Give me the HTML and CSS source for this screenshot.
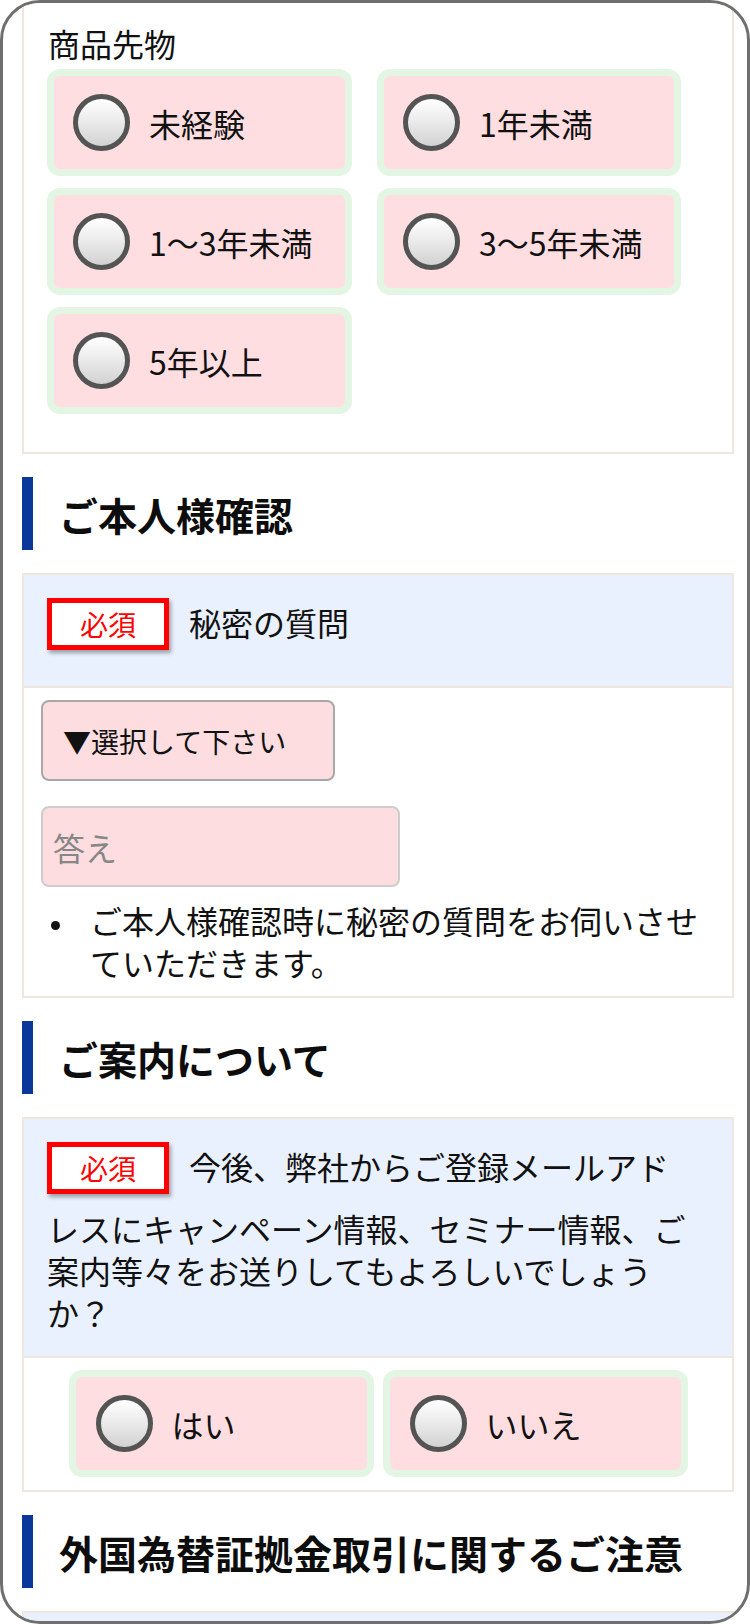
FILE: index.html
```html
<!DOCTYPE html>
<html lang="ja">
<head>
<meta charset="utf-8">
<title>お申込みフォーム</title>
<link rel="stylesheet" href="styles.css">
</head>
<body>
<div class="frame">
  <section class="box box-open">
    <div class="box-body first">
      <p class="field-label">商品先物</p>
      <div class="opt-grid">
        <label class="opt"><input type="radio" name="futures" class="radio"><span>未経験</span></label>
        <label class="opt"><input type="radio" name="futures" class="radio"><span>1年未満</span></label>
        <label class="opt"><input type="radio" name="futures" class="radio"><span>1〜3年未満</span></label>
        <label class="opt"><input type="radio" name="futures" class="radio"><span>3〜5年未満</span></label>
        <label class="opt"><input type="radio" name="futures" class="radio"><span>5年以上</span></label>
      </div>
    </div>
  </section>

  <h2 class="sec-title">ご本人様確認</h2>
  <section class="box">
    <div class="box-head"><span class="req">必須</span>秘密の質問</div>
    <div class="box-body">
      <select class="select"><option>▼選択して下さい</option></select>
      <input class="answer" type="text" placeholder="答え">
      <ul class="notes">
        <li>ご本人様確認時に秘密の質問をお伺いさせていただきます。</li>
      </ul>
    </div>
  </section>

  <h2 class="sec-title">ご案内について</h2>
  <section class="box">
    <div class="box-head"><span class="req">必須</span>今後、弊社からご登録メールアドレスにキャンペーン情報、セミナー情報、ご案内等々をお送りしてもよろしいでしょうか？</div>
    <div class="box-body yesno">
      <label class="opt"><input type="radio" name="mail" class="radio"><span>はい</span></label>
      <label class="opt"><input type="radio" name="mail" class="radio"><span>いいえ</span></label>
    </div>
  </section>

  <h2 class="sec-title">外国為替証拠金取引に関するご注意</h2>
  <section class="box">
    <div class="box-head empty"></div>
  </section>
</div>
</body>
</html>
```

FILE: styles.css
```css
html, body {
  margin: 0;
  padding: 0;
  background: #ffffff;
}

body {
  font-family: "Noto Sans CJK JP", "Noto Sans", sans-serif;
  color: #111111;
}

.frame {
  box-sizing: border-box;
  width: 750px;
  height: 1624px;
  border: 3px solid #6f6f6f;
  border-radius: 40px;
  overflow: hidden;
  padding: 0 13px 0 19px;
  background: #ffffff;
}

.box {
  border: 2px solid #eee6df;
  background: #ffffff;
}

.box-open {
  border-top: none;
}

.box-body {
  padding: 12px 24px 13px 17px;
}

.box-body.first {
  padding: 19px 20px 38px 23px;
}

.field-label {
  margin: 0 0 5px 1px;
  font-size: 32px;
  line-height: 42px;
}

.opt-grid {
  display: grid;
  grid-template-columns: 305px 304px;
  grid-auto-rows: 107px;
  column-gap: 25px;
  row-gap: 12px;
}

.opt {
  box-sizing: border-box;
  height: 107px;
  border: 7px solid #e3f5e3;
  border-radius: 13px;
  background: #ffdee1;
  display: flex;
  align-items: center;
  gap: 19px;
  padding-left: 19px;
  font-size: 32px;
  line-height: 42px;
}

.radio {
  -webkit-appearance: none;
  appearance: none;
  box-sizing: border-box;
  margin: 0;
  flex: none;
  width: 57px;
  height: 57px;
  border: 5px solid #545454;
  border-radius: 50%;
  background: linear-gradient(#ffffff 0%, #ececec 45%, #d2d2d2 100%);
}

.sec-title {
  margin: 23px 0 23px 0;
  height: 73px;
  box-sizing: border-box;
  border-left: 11px solid #0b3798;
  padding-left: 26px;
  display: flex;
  align-items: center;
  font-size: 39px;
  font-weight: 700;
  color: #0d0d0d;
}

.box-head {
  background: #e9f0fe;
  border-bottom: 2px solid #eee6df;
  padding: 23px 36px 23px 23px;
  font-size: 32px;
  line-height: 42px;
}

.box-head.empty {
  height: 120px;
  border-bottom: none;
}

.req {
  display: inline-block;
  box-sizing: border-box;
  width: 122px;
  height: 52px;
  margin: 0 20px 13px 0;
  border: 5px solid #ff0000;
  background: #ffffff;
  color: #ff0000;
  font-size: 28px;
  line-height: 42px;
  text-align: center;
  box-shadow: 2px 3px 4px rgba(0, 0, 0, 0.35);
}

.select {
  -webkit-appearance: none;
  appearance: none;
  display: block;
  box-sizing: border-box;
  width: 294px;
  height: 81px;
  margin: 0 0 25px 0;
  padding: 0 0 0 20px;
  border: 2px solid #a8a8a8;
  border-radius: 8px;
  background: #fddde0;
  color: #111111;
  font-family: inherit;
  font-size: 28px;
}

.answer {
  -webkit-appearance: none;
  appearance: none;
  display: block;
  box-sizing: border-box;
  width: 359px;
  height: 81px;
  margin: 0;
  padding: 0 10px;
  border: 2px solid #cdcdcd;
  border-radius: 8px;
  background: #fddde0;
  font-family: inherit;
  font-size: 32px;
  color: #111111;
}

.answer::placeholder {
  color: #878787;
}

.notes {
  list-style: none;
  margin: 12px 0 0 0;
  padding: 0;
  font-size: 32px;
  line-height: 42px;
}

.notes li {
  padding-left: 49px;
  text-indent: -49px;
}

.notes li::before {
  content: "";
  display: inline-block;
  width: 9px;
  height: 9px;
  margin: 0 30px 0 10px;
  border-radius: 50%;
  background: #111111;
  vertical-align: middle;
  text-indent: 0;
}

.yesno {
  display: flex;
  justify-content: center;
  gap: 9px;
  padding: 12px 0 13px 0;
}

.yesno .opt {
  width: 305px;
  padding-left: 20px;
}
```
